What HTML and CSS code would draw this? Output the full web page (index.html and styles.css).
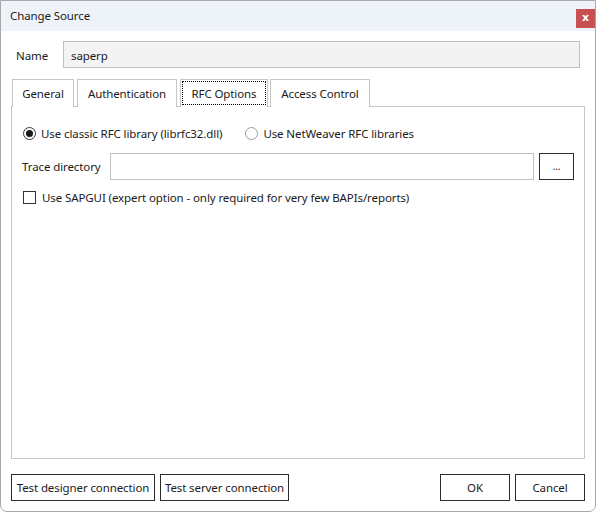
FILE: index.html
```html
<!DOCTYPE html>
<html>
<head>
<meta charset="utf-8">
<link rel="stylesheet" href="styles.css">
</head>
<body>
<div class="window">
  <div class="titlebar">
    <span class="title">Change Source</span>
    <span class="close">x</span>
  </div>
  <div class="content">
    <div class="name-row">
      <span class="name-label">Name</span>
      <div class="name-input">saperp</div>
    </div>
    <div class="tabs">
      <div class="tab t-general">General</div>
      <div class="tab t-auth">Authentication</div>
      <div class="tab t-rfc selected"><span class="focus">RFC Options</span></div>
      <div class="tab t-access">Access Control</div>
    </div>
    <div class="panel">
      <div class="radio-row">
        <label class="radio-opt r1"><span class="radio checked"></span>Use classic RFC library (librfc32.dll)</label>
        <label class="radio-opt r2"><span class="radio"></span>Use NetWeaver RFC libraries</label>
      </div>
      <div class="trace-row">
        <span class="trace-label">Trace directory</span>
        <div class="trace-input"></div>
        <div class="btn dots">...</div>
      </div>
      <label class="check-row"><span class="check"></span>Use SAPGUI (expert option - only required for very few BAPIs/reports)</label>
    </div>
    <div class="buttons">
      <div class="btn b-designer">Test designer connection</div>
      <div class="btn b-server">Test server connection</div>
      <div class="spacer"></div>
      <div class="btn b-ok">OK</div>
      <div class="btn b-cancel">Cancel</div>
    </div>
  </div>
</div>
</body>
</html>
```
FILE: styles.css
```css
* { box-sizing: border-box; }
html, body { margin: 0; padding: 0; background: #ffffff; }
body {
  font-family: "Noto Sans", "Open Sans", sans-serif;
  font-size: 11.5px;
  letter-spacing: -0.1px;
  color: #1a1a1a;
}
.window {
  width: 596px;
  height: 512px;
  border: 1px solid #a8a8a8;
  border-radius: 0 0 7px 7px;
  background: #ffffff;
  display: flex;
  flex-direction: column;
  overflow: hidden;
}
.titlebar {
  height: 30px;
  flex: none;
  background: #eef2f9;
  display: flex;
  align-items: center;
  padding-left: 9px;
  padding-bottom: 1px;
  position: relative;
}
.title { color: #1a1a1a; }
.close {
  position: absolute;
  top: 8px;
  right: 0;
  width: 19px;
  height: 19px;
  background: #c75050;
  color: #ffffff;
  font-weight: bold;
  font-size: 11px;
  letter-spacing: 0;
  line-height: 17px;
  text-align: center;
  font-family: "DejaVu Sans", sans-serif;
}
.content {
  flex: 1;
  display: flex;
  flex-direction: column;
  padding: 10px 10px 10px 10px;
}
.name-row {
  display: flex;
  height: 27px;
  align-items: center;
}
.name-label {
  width: 52px;
  padding-left: 5px;
  padding-top: 1px;
}
.name-input {
  flex: 1;
  height: 27px;
  margin-right: 5px;
  background: #f3f3f3;
  border: 1px solid #c0c0c0;
  display: flex;
  align-items: center;
  padding-left: 7px;
  padding-top: 1px;
}
.tabs {
  display: flex;
  margin-top: 11px;
  padding-left: 1px;
  height: 27px;
  position: relative;
  z-index: 1;
}
.tab {
  height: 28px;
  border: 1px solid #c6c6c6;
  border-bottom: none;
  background: #ffffff;
  display: flex;
  align-items: center;
  justify-content: center;
}
.t-general { width: 62px; }
.t-auth { width: 100px; margin-left: 3px; }
.t-rfc { width: 88px; margin-left: 3px; }
.t-access { width: 100px; margin-left: 2px; }
.tab.selected { padding: 1px 1px 2px 1px; align-items: stretch; }
.focus {
  flex: 1;
  border: 1px dotted #000000;
  display: flex;
  align-items: center;
  justify-content: center;
}
.panel {
  flex: 1;
  border: 1px solid #c6c6c6;
  padding: 0 10px 0 11px;
}
.radio-row {
  display: flex;
  margin-top: 19px;
  height: 15px;
  align-items: center;
}
.radio-opt { display: flex; align-items: center; }
.r2 { margin-left: 23px; }
.radio {
  width: 13px;
  height: 13px;
  border-radius: 50%;
  border: 1px solid #999999;
  margin-right: 5px;
  display: flex;
  align-items: center;
  justify-content: center;
}
.radio.checked { border-color: #333333; }
.radio.checked::after {
  content: "";
  width: 7px;
  height: 7px;
  border-radius: 50%;
  background: #1a1a1a;
}
.trace-row {
  display: flex;
  align-items: center;
  margin-top: 12px;
  height: 27px;
}
.trace-label { width: 88px; margin-left: -1px; }
.trace-input {
  flex: 1;
  height: 27px;
  border: 1px solid #c0c0c0;
}
.btn {
  height: 27px;
  border: 1px solid #2b2b2b;
  background: #ffffff;
  display: flex;
  align-items: center;
  justify-content: center;
  padding-bottom: 1px;
}
.dots { width: 35px; margin-left: 5px; font-size: 10px; }
.check-row {
  display: flex;
  align-items: center;
  margin-top: 10px;
  height: 15px;
}
.check {
  width: 13px;
  height: 13px;
  border: 1px solid #333333;
  margin-right: 6px;
}
.buttons {
  display: flex;
  margin-top: 15px;
  height: 27px;
}
.b-designer { width: 144px; }
.b-server { width: 129px; margin-left: 5px; }
.spacer { flex: 1; }
.b-ok { width: 70px; }
.b-cancel { width: 70px; margin-left: 5px; }
```
